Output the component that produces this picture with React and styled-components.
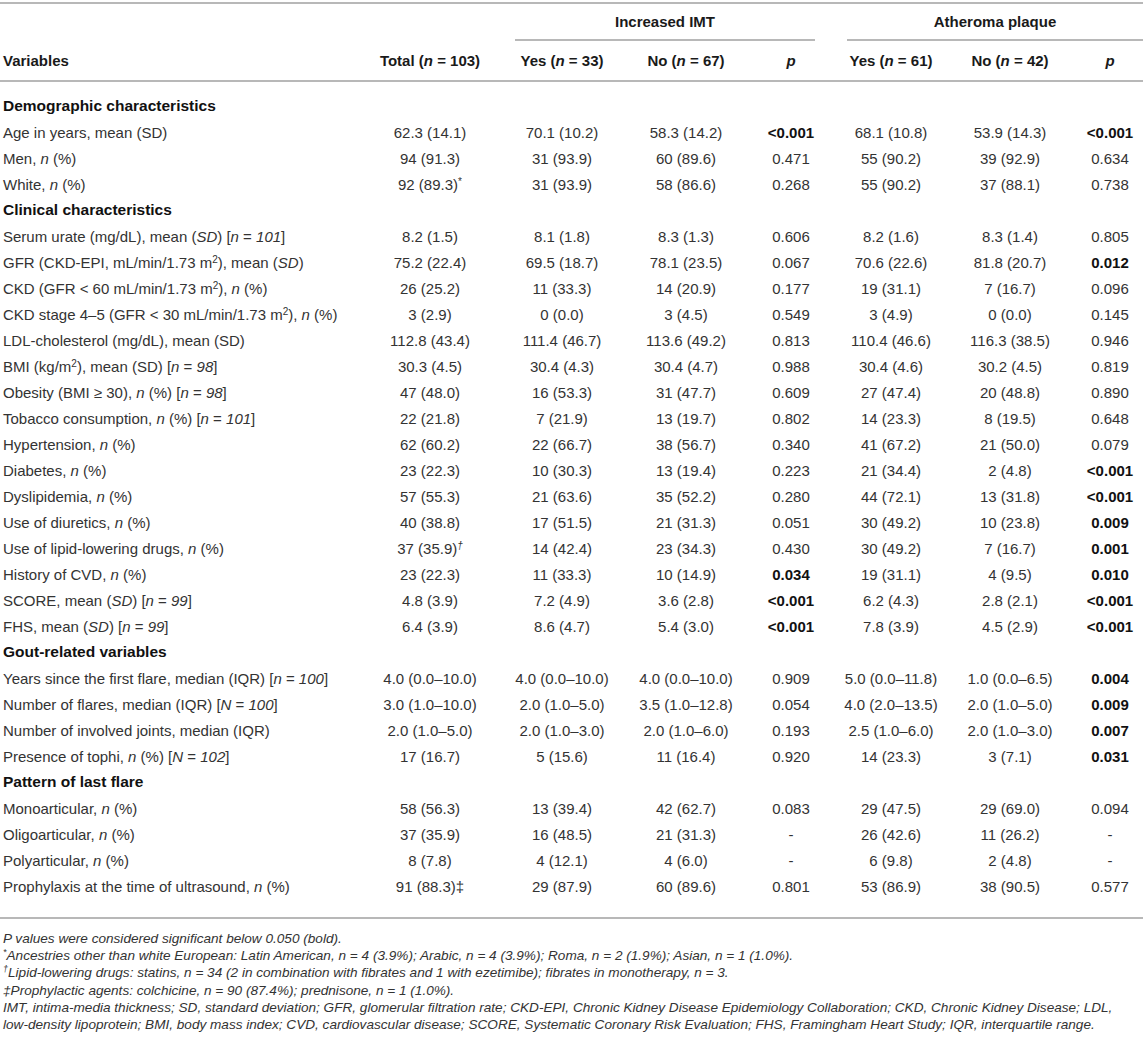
import React from "react";
import styled, { createGlobalStyle } from "styled-components";

const GlobalStyle = createGlobalStyle`
  body {
    margin: 0;
    background: #ffffff;
    font-family: "Liberation Sans", Arial, Helvetica, sans-serif;
    color: #333333;
  }
`;

const Page = styled.div`
  width: 1143px;
  padding-top: 2px;
`;

const Table = styled.table`
  width: 1143px;
  table-layout: fixed;
  border-collapse: separate;
  border-spacing: 0;
  border-top: 2px solid #b8b8b8;
  font-size: 15px;
`;

const Col = styled.col`
  width: ${({ $w }) => $w}px;
`;

const GroupHeadRow = styled.tr`
  height: 37px;
`;

const GroupCell = styled.th`
  padding: 0;
  vertical-align: bottom;
`;

const GroupLabel = styled.div`
  margin: ${({ $margin }) => $margin};
  padding-bottom: 9px;
  line-height: 16px;
  border-bottom: 2px solid #b8b8b8;
  font-weight: bold;
  color: #1a1a1a;
  text-align: center;
  white-space: nowrap;
`;

const HeadCell = styled.th`
  height: 39px;
  padding: 0 0 0 ${({ $left }) => ($left ? "3px" : "0")};
  border-bottom: 2px solid #b8b8b8;
  text-align: ${({ $left }) => ($left ? "left" : "center")};
  font-weight: bold;
  color: #1a1a1a;
  white-space: nowrap;
  vertical-align: middle;
`;

const SpacerRow = styled.tr`
  height: ${({ $h }) => $h}px;
  td {
    padding: 0;
  }
`;

const SectionCell = styled.td`
  height: 26px;
  padding: 0 0 0 3px;
  font-weight: bold;
  font-size: 15.5px;
  color: #111111;
  white-space: nowrap;
  vertical-align: middle;
`;

const LabelCell = styled.td`
  height: 26px;
  padding: 0 0 0 3px;
  white-space: nowrap;
  vertical-align: middle;
`;

const ValueCell = styled.td`
  height: 26px;
  padding: 0;
  text-align: center;
  white-space: nowrap;
  vertical-align: middle;
  font-weight: ${({ $bold }) => ($bold ? "bold" : "normal")};
  color: ${({ $bold }) => ($bold ? "#111111" : "#333333")};
`;

const I = styled.i`
  font-style: italic;
`;

const Sup = styled.sup`
  font-size: 10px;
  line-height: 0;
  vertical-align: 5px;
`;

const Notes = styled.div`
  border-top: 2px solid #b8b8b8;
  padding: 11px 0 0 3px;
  font-size: 13.6px;
  line-height: 17.2px;
  font-style: italic;
  color: #333333;
`;

const Note = styled.p`
  margin: 0;
`;

const NoteMark = styled.sup`
  font-size: 9px;
  line-height: 0;
  vertical-align: 5px;
`;

const NoBreak = styled.span`
  white-space: nowrap;
`;

const N = ({ v, big }) => (
  <>
    [<I>{big ? "N" : "n"}</I> = <I>{v}</I>]
  </>
);

const n = <I>n</I>;
const SD = (
  <>
    (<I>SD</I>)
  </>
);
const m2 = (
  <>
    m<Sup>2</Sup>
  </>
);

const sections = [
  {
    title: "Demographic characteristics",
    rows: [
      [<>Age in years, mean (SD)</>, "62.3 (14.1)", "70.1 (10.2)", "58.3 (14.2)", "<0.001*", "68.1 (10.8)", "53.9 (14.3)", "<0.001*"],
      [<>Men, {n} (%)</>, "94 (91.3)", "31 (93.9)", "60 (89.6)", "0.471", "55 (90.2)", "39 (92.9)", "0.634"],
      [<>White, {n} (%)</>, <>92 (89.3)<Sup>*</Sup></>, "31 (93.9)", "58 (86.6)", "0.268", "55 (90.2)", "37 (88.1)", "0.738"],
    ],
  },
  {
    title: "Clinical characteristics",
    rows: [
      [<>Serum urate (mg/dL), mean {SD} <N v="101" /></>, "8.2 (1.5)", "8.1 (1.8)", "8.3 (1.3)", "0.606", "8.2 (1.6)", "8.3 (1.4)", "0.805"],
      [<>GFR (CKD-EPI, mL/min/1.73 {m2}), mean {SD}</>, "75.2 (22.4)", "69.5 (18.7)", "78.1 (23.5)", "0.067", "70.6 (22.6)", "81.8 (20.7)", "0.012*"],
      [<>CKD (GFR &lt; 60 mL/min/1.73 {m2}), {n} (%)</>, "26 (25.2)", "11 (33.3)", "14 (20.9)", "0.177", "19 (31.1)", "7 (16.7)", "0.096"],
      [<>CKD stage 4–5 (GFR &lt; 30 mL/min/1.73 {m2}), {n} (%)</>, "3 (2.9)", "0 (0.0)", "3 (4.5)", "0.549", "3 (4.9)", "0 (0.0)", "0.145"],
      [<>LDL-cholesterol (mg/dL), mean (SD)</>, "112.8 (43.4)", "111.4 (46.7)", "113.6 (49.2)", "0.813", "110.4 (46.6)", "116.3 (38.5)", "0.946"],
      [<>BMI (kg/{m2}), mean (SD) <N v="98" /></>, "30.3 (4.5)", "30.4 (4.3)", "30.4 (4.7)", "0.988", "30.4 (4.6)", "30.2 (4.5)", "0.819"],
      [<>Obesity (BMI ≥ 30), {n} (%) <N v="98" /></>, "47 (48.0)", "16 (53.3)", "31 (47.7)", "0.609", "27 (47.4)", "20 (48.8)", "0.890"],
      [<>Tobacco consumption, {n} (%) <N v="101" /></>, "22 (21.8)", "7 (21.9)", "13 (19.7)", "0.802", "14 (23.3)", "8 (19.5)", "0.648"],
      [<>Hypertension, {n} (%)</>, "62 (60.2)", "22 (66.7)", "38 (56.7)", "0.340", "41 (67.2)", "21 (50.0)", "0.079"],
      [<>Diabetes, {n} (%)</>, "23 (22.3)", "10 (30.3)", "13 (19.4)", "0.223", "21 (34.4)", "2 (4.8)", "<0.001*"],
      [<>Dyslipidemia, {n} (%)</>, "57 (55.3)", "21 (63.6)", "35 (52.2)", "0.280", "44 (72.1)", "13 (31.8)", "<0.001*"],
      [<>Use of diuretics, {n} (%)</>, "40 (38.8)", "17 (51.5)", "21 (31.3)", "0.051", "30 (49.2)", "10 (23.8)", "0.009*"],
      [<>Use of lipid-lowering drugs, {n} (%)</>, <>37 (35.9)<Sup><I>†</I></Sup></>, "14 (42.4)", "23 (34.3)", "0.430", "30 (49.2)", "7 (16.7)", "0.001*"],
      [<>History of CVD, {n} (%)</>, "23 (22.3)", "11 (33.3)", "10 (14.9)", "0.034*", "19 (31.1)", "4 (9.5)", "0.010*"],
      [<>SCORE, mean {SD} <N v="99" /></>, "4.8 (3.9)", "7.2 (4.9)", "3.6 (2.8)", "<0.001*", "6.2 (4.3)", "2.8 (2.1)", "<0.001*"],
      [<>FHS, mean {SD} <N v="99" /></>, "6.4 (3.9)", "8.6 (4.7)", "5.4 (3.0)", "<0.001*", "7.8 (3.9)", "4.5 (2.9)", "<0.001*"],
    ],
  },
  {
    title: "Gout-related variables",
    rows: [
      [<>Years since the first flare, median (IQR) <N v="100" /></>, "4.0 (0.0–10.0)", "4.0 (0.0–10.0)", "4.0 (0.0–10.0)", "0.909", "5.0 (0.0–11.8)", "1.0 (0.0–6.5)", "0.004*"],
      [<>Number of flares, median (IQR) <N v="100" big /></>, "3.0 (1.0–10.0)", "2.0 (1.0–5.0)", "3.5 (1.0–12.8)", "0.054", "4.0 (2.0–13.5)", "2.0 (1.0–5.0)", "0.009*"],
      [<>Number of involved joints, median (IQR)</>, "2.0 (1.0–5.0)", "2.0 (1.0–3.0)", "2.0 (1.0–6.0)", "0.193", "2.5 (1.0–6.0)", "2.0 (1.0–3.0)", "0.007*"],
      [<>Presence of tophi, {n} (%) <N v="102" big /></>, "17 (16.7)", "5 (15.6)", "11 (16.4)", "0.920", "14 (23.3)", "3 (7.1)", "0.031*"],
    ],
  },
  {
    title: "Pattern of last flare",
    rows: [
      [<>Monoarticular, {n} (%)</>, "58 (56.3)", "13 (39.4)", "42 (62.7)", "0.083", "29 (47.5)", "29 (69.0)", "0.094"],
      [<>Oligoarticular, {n} (%)</>, "37 (35.9)", "16 (48.5)", "21 (31.3)", "-", "26 (42.6)", "11 (26.2)", "-"],
      [<>Polyarticular, {n} (%)</>, "8 (7.8)", "4 (12.1)", "4 (6.0)", "-", "6 (9.8)", "2 (4.8)", "-"],
      [<>Prophylaxis at the time of ultrasound, {n} (%)</>, "91 (88.3)‡", "29 (87.9)", "60 (89.6)", "0.801", "53 (86.9)", "38 (90.5)", "0.577"],
    ],
  },
];

const widths = [365, 130, 134, 114, 96, 104, 134, 66];

// a trailing "*" on a plain string marks a significant (bold) p value
const Value = ({ v }) => {
  if (typeof v === "string" && v.endsWith("*")) {
    return <ValueCell $bold>{v.slice(0, -1)}</ValueCell>;
  }
  return <ValueCell>{v}</ValueCell>;
};

export default function App() {
  return (
    <Page>
      <GlobalStyle />
      <Table>
        <colgroup>
          {widths.map((w, i) => (
            <Col key={i} $w={w} />
          ))}
        </colgroup>
        <thead>
          <GroupHeadRow>
            <GroupCell colSpan={2} />
            <GroupCell colSpan={3}>
              <GroupLabel $margin="0 24px 0 20px">Increased IMT</GroupLabel>
            </GroupCell>
            <GroupCell colSpan={3}>
              <GroupLabel $margin="0 0 0 8px">Atheroma plaque</GroupLabel>
            </GroupCell>
          </GroupHeadRow>
          <tr>
            <HeadCell $left>Variables</HeadCell>
            <HeadCell>
              Total (<I>n</I> = 103)
            </HeadCell>
            <HeadCell>
              Yes (<I>n</I> = 33)
            </HeadCell>
            <HeadCell>
              No (<I>n</I> = 67)
            </HeadCell>
            <HeadCell>
              <I>p</I>
            </HeadCell>
            <HeadCell>
              Yes (<I>n</I> = 61)
            </HeadCell>
            <HeadCell>
              No (<I>n</I> = 42)
            </HeadCell>
            <HeadCell>
              <I>p</I>
            </HeadCell>
          </tr>
        </thead>
        <tbody>
          <SpacerRow $h={11}>
            <td colSpan={8} />
          </SpacerRow>
          {sections.map((s) => (
            <React.Fragment key={s.title}>
              <tr>
                <SectionCell colSpan={8}>{s.title}</SectionCell>
              </tr>
              {s.rows.map((r, i) => (
                <tr key={i}>
                  <LabelCell>{r[0]}</LabelCell>
                  {r.slice(1).map((v, j) => (
                    <Value key={j} v={v} />
                  ))}
                </tr>
              ))}
            </React.Fragment>
          ))}
          <SpacerRow $h={18}>
            <td colSpan={8} />
          </SpacerRow>
        </tbody>
      </Table>
      <Notes>
        <Note>P values were considered significant below 0.050 (bold).</Note>
        <Note>
          <NoteMark>*</NoteMark>Ancestries other than white European: Latin American, n = 4 (3.9%); Arabic, n = 4
          (3.9%); Roma, n = 2 (1.9%); Asian, n = 1 (1.0%).
        </Note>
        <Note>
          <NoteMark>†</NoteMark>Lipid-lowering drugs: statins, n = 34 (2 in combination with fibrates and 1 with
          ezetimibe); fibrates in monotherapy, n = 3.
        </Note>
        <Note>‡Prophylactic agents: colchicine, n = 90 (87.4%); prednisone, n = 1 (1.0%).</Note>
        <Note>
          IMT, intima-media thickness; SD, standard deviation; GFR, glomerular filtration rate; CKD-EPI, Chronic Kidney
          Disease Epidemiology Collaboration; CKD, Chronic Kidney Disease; LDL, <NoBreak>low-density</NoBreak>{" "}
          lipoprotein; BMI, body mass index; CVD, cardiovascular disease; SCORE, Systematic Coronary Risk Evaluation;
          FHS, Framingham Heart Study; IQR, interquartile range.
        </Note>
      </Notes>
    </Page>
  );
}
